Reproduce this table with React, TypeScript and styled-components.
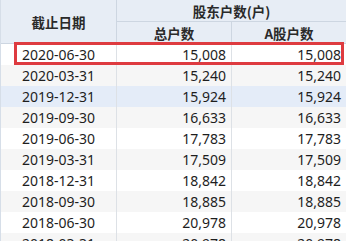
import React from "react";
import styled, { createGlobalStyle } from "styled-components";

const Global = createGlobalStyle`
  html, body { margin: 0; padding: 0; background: #ffffff; }
  body { font-family: "Noto Sans", "Noto Sans CJK SC", sans-serif; }
`;

const Wrap = styled.div`
  position: relative;
  width: 346px;
  height: 241px;
  overflow: hidden;
  border-left: 1px solid #d6dee8;
  box-sizing: border-box;
`;

const Grid = styled.div`
  display: grid;
  grid-template-columns: 116px 115px 1fr;
  font-size: 14px;
  color: #1e1e1e;
`;

const HeadCell = styled.div<{ $span?: number; $rows?: number; $noRight?: boolean }>`
  grid-column: span ${(p) => p.$span ?? 1};
  grid-row: span ${(p) => p.$rows ?? 1};
  background: #e7edf5;
  border-right: ${(p) => (p.$noRight ? "none" : "1px solid #cdd6e1")};
  border-bottom: 1px solid #cdd6e1;
  display: flex;
  align-items: center;
  justify-content: center;
  height: ${(p) => ((p.$rows ?? 1) === 2 ? "auto" : "21px")};
  font-family: "Noto Sans CJK SC", sans-serif;
  font-size: 13.5px;
  color: #2a2a2a;
  font-weight: 700;
`;

const Cell = styled.div<{ $tone: "white" | "gray" | "blue"; $align: "center" | "right"; $noRight?: boolean }>`
  height: 21px;
  line-height: 21px;
  background: ${(p) => (p.$tone === "gray" ? "#f6f6f6" : p.$tone === "blue" ? "#e4ecf8" : "#ffffff")};
  border-right: ${(p) => (p.$noRight ? "none" : "1px solid #dde1e6")};
  text-align: ${(p) => p.$align};
  padding: 0 5px;
  box-sizing: border-box;
  white-space: nowrap;
`;

const Mark = styled.div`
  position: absolute;
  left: 13px;
  top: 42px;
  width: 330px;
  height: 23px;
  border: 3px solid #de3b40;
  box-sizing: border-box;
  pointer-events: none;
`;

const rows: [string, string, string][] = [
  ["2020-06-30", "15,008", "15,008"],
  ["2020-03-31", "15,240", "15,240"],
  ["2019-12-31", "15,924", "15,924"],
  ["2019-09-30", "16,633", "16,633"],
  ["2019-06-30", "17,783", "17,783"],
  ["2019-03-31", "17,509", "17,509"],
  ["2018-12-31", "18,842", "18,842"],
  ["2018-09-30", "18,885", "18,885"],
  ["2018-06-30", "20,978", "20,978"],
  ["2018-03-31", "20,978", "20,978"],
];

export default function App() {
  return (
    <>
      <Global />
      <Wrap>
        <Grid>
          <HeadCell $rows={2}>截止日期</HeadCell>
          <HeadCell $span={2} $noRight>股东户数(户)</HeadCell>
          <HeadCell>总户数</HeadCell>
          <HeadCell $noRight>A股户数</HeadCell>
          {rows.map((r, i) => {
            const tone = i === 2 ? "blue" : i % 2 === 1 ? "gray" : "white";
            return (
              <React.Fragment key={i}>
                <Cell $tone={tone} $align="center">{r[0]}</Cell>
                <Cell $tone={tone} $align="right">{r[1]}</Cell>
                <Cell $tone={tone} $align="right" $noRight>{r[2]}</Cell>
              </React.Fragment>
            );
          })}
        </Grid>
        <Mark />
      </Wrap>
    </>
  );
}
